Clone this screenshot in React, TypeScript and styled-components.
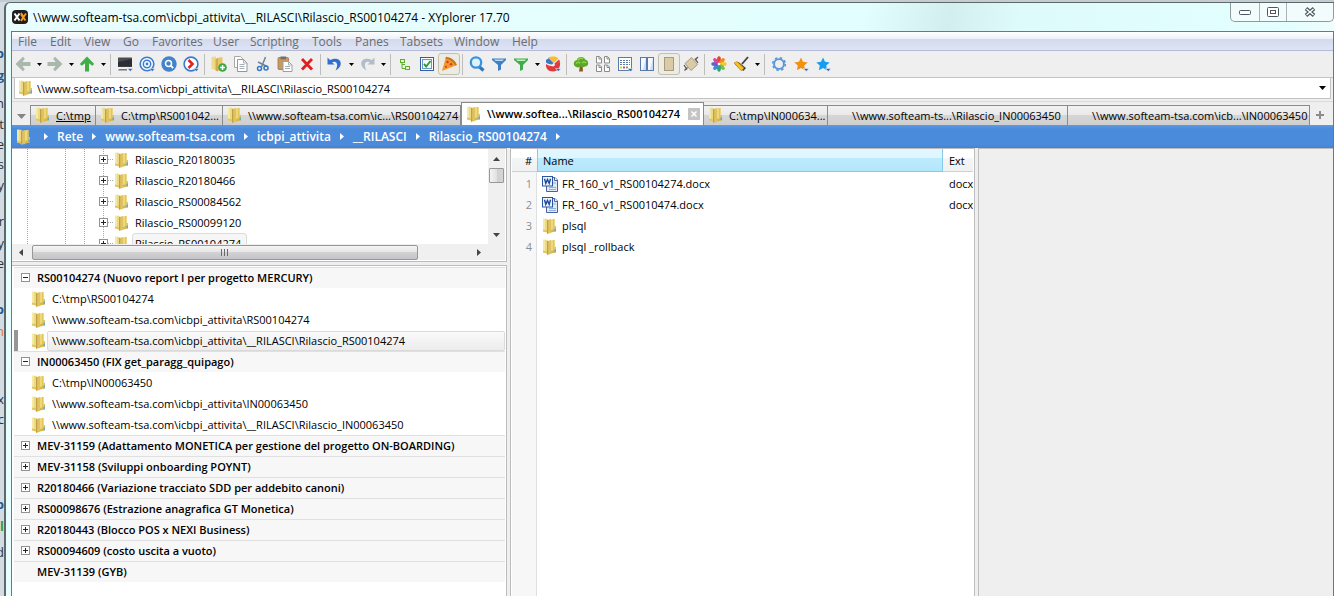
import React from 'react';
import styled, { createGlobalStyle, css } from 'styled-components';

const uiFont = '"Open Sans", "Noto Sans", sans-serif';

const GlobalStyle = createGlobalStyle`
  *, *::before, *::after { box-sizing: border-box; }
  html, body, #root { height: 100%; }
  body { margin: 0; overflow: hidden; background: #d3dce3; font: 11px/21px ${uiFont}; color: #000; }
  button, input { font: inherit; color: inherit; }
  button { border: 0; padding: 0; margin: 0; background: none; cursor: default; white-space: pre; }
  a { color: inherit; text-decoration: none; }
  svg { display: block; flex: none; }
  ul { list-style: none; margin: 0; padding: 0; }
`;

/* ---------- window shell ---------- */

const Desktop = styled.div`
  display: flex;
  height: 100%;
  padding-top: 2px;
  background: linear-gradient(#c3ccd3 0 2px, #d3dce3 2px);
`;

const Behind = styled.div`
  flex: none;
  width: 4px;
  padding-top: 41px;
  overflow: hidden;
  background: #d3dce3;
`;

const BehindLine = styled.div<{ $h: number; $color?: string; $bold?: boolean }>`
  display: flex;
  justify-content: flex-end;
  height: ${p => p.$h}px;
  font-size: 13px;
  line-height: 20px;
  color: ${p => p.$color || '#333'};
  font-weight: ${p => (p.$bold ? 700 : 400)};
`;

const Window = styled.div`
  flex: 1;
  min-width: 0;
  display: flex;
  flex-direction: column;
  border: 1px solid #5f6868;
  border-width: 1px 0 0 2px;
  border-radius: 6px 0 0 0;
  background: linear-gradient(100deg, #e9fdfd 0, #e2fefe 60%, #d3eeee 66%, #defbfb 71%, #e3ffff 90%, #f4fcfc 94%);
`;

const TitleBar = styled.header`
  display: flex;
  align-items: flex-start;
  height: 28px;
  padding-left: 6px;
`;

const Title = styled.h1`
  flex: 1;
  display: flex;
  align-items: center;
  gap: 5px;
  margin: 0;
  height: 28px;
  font-size: 12px;
  font-weight: 400;
  white-space: pre;
`;

const Captions = styled.div`
  display: flex;
  height: 19px;
  border: 1px solid #8f9a9c;
  border-top: 0;
  border-radius: 0 0 5px 5px;
  background: #f3fcfc;
`;

const CaptionButton = styled.button<{ $w: number }>`
  display: flex;
  align-items: center;
  justify-content: center;
  width: ${p => p.$w}px;
  & + & { border-left: 1px solid #a9b2b4; }
`;

const Client = styled.div`
  flex: 1;
  min-height: 0;
  display: flex;
  flex-direction: column;
  margin-left: 5px;
  border: 1px solid #6f7777;
  border-bottom: 0;
  background: #efefef;
`;

const MenuBar = styled.nav`
  display: flex;
  align-items: center;
  height: 19px;
  padding-left: 6px;
  border-bottom: 1px solid #b5bbd6;
  background: linear-gradient(#fff 0, #edf0f8 7px, #d3daee 7px, #dfe4f4 18px);
`;

const MenuItem = styled.button<{ $w: number }>`
  width: ${p => p.$w}px;
  padding-top: 2px;
  text-align: left;
  font-size: 12px;
  line-height: 16px;
  color: #6d6d6d;
`;

/* ---------- toolbar ---------- */

const ToolBar = styled.div`
  display: flex;
  align-items: center;
  height: 27px;
  border-bottom: 1px solid #c3c3c3;
`;

const ToolButton = styled.button<{ $pressed?: boolean }>`
  display: flex;
  align-items: center;
  justify-content: center;
  width: 22px;
  height: 22px;
  border: 1px solid ${p => (p.$pressed ? '#c2c0ae' : 'transparent')};
  border-radius: 3px;
  background: ${p => (p.$pressed ? '#ecebe4' : 'none')};
`;

const CaretButton = styled.button`
  display: flex;
  align-items: center;
  justify-content: center;
  width: 10px;
  height: 22px;
`;

const ToolSeparator = styled.span`
  width: 1px;
  height: 21px;
  margin: 0 3px 0 2px;
  background: #bdbdbd;
`;

const AddressBar = styled.form`
  display: flex;
  align-items: center;
  height: 21px;
  margin: 0 2px;
  padding: 0 4px 0 3px;
  gap: 3px;
  border: 1px solid #c3c3c3;
  border-top: 0;
  background: #fff;
`;

const AddressInput = styled.input`
  flex: 1;
  min-width: 0;
  height: 18px;
  padding: 0;
  border: 0;
  outline: 0;
  background: none;
`;

/* ---------- tabs ---------- */

const TabStrip = styled.div`
  display: flex;
  align-items: flex-end;
  height: 26px;
  border-top: 2px solid #efefef;
  box-shadow: inset 0 1px #dadada;
`;

const TabMenu = styled.button`
  display: flex;
  align-items: center;
  justify-content: center;
  width: 18px;
  height: 18px;
`;

const Tab = styled.button<{ $w: number; $active?: boolean; $home?: boolean; $plain?: boolean }>`
  display: flex;
  align-items: center;
  gap: 5px;
  flex: 0 1 ${p => p.$w}px;
  min-width: 0;
  height: 20px;
  padding: 0 3px 1px ${p => (p.$plain ? 24 : 4)}px;
  overflow: hidden;
  border: 1px solid #8b8b8b;
  border-width: 1px 1px 0 0;
  background: linear-gradient(#f2f2f2 0, #e9e9e9 9px, #d6d6d6 9px, #cfcfcf);
  ${p => p.$home && css`
    border-left-width: 1px;
    span { text-decoration: underline; }
  `}
  ${p => p.$active && css`
    height: 23px;
    border-width: 1px 1px 0 1px;
    background: #fff;
    font-weight: 600;
  `}
`;

const CloseMark = styled.i`
  display: flex;
  align-items: center;
  justify-content: center;
  flex: none;
  width: 12px;
  height: 12px;
  margin-left: auto;
  background: #c4c4c4;
`;

const NewTab = styled.button`
  display: flex;
  align-items: center;
  justify-content: center;
  width: 20px;
  height: 20px;
`;

const Breadcrumb = styled.nav`
  display: flex;
  align-items: center;
  gap: 9px;
  height: 23px;
  padding-left: 4px;
  font-size: 12px;
  font-weight: 600;
  color: #fff;
  background: linear-gradient(#5f9ae2, #4b8bdb 4px, #4b8bdb 20px, #4382d4);
  svg + svg { margin-left: 3px; }
  a { white-space: pre; }
`;

/* ---------- panes ---------- */

const Panes = styled.main`
  flex: 1;
  min-height: 0;
  display: flex;
  gap: 3px;
`;

const NavColumn = styled.div`
  flex: none;
  width: 495px;
  display: flex;
  flex-direction: column;
  gap: 3px;
`;

const Pane = styled.section`
  border: 1px solid #bcbcbc;
  border-left: 0;
  background: #fff;
  padding: 0 1px 1px 0;
`;

const TreePane = styled(Pane)`
  display: grid;
  grid-template-columns: 1fr 17px;
  grid-template-rows: 95px 16px;
  flex: none;
`;

const TreeView = styled.ul`
  overflow: hidden;
  background:
    repeating-linear-gradient(#a8a8a8 0 1px, transparent 1px 2px) 15px 0 / 1px 100% no-repeat,
    repeating-linear-gradient(#a8a8a8 0 1px, transparent 1px 2px) 53px 0 / 1px 100% no-repeat,
    repeating-linear-gradient(#a8a8a8 0 1px, transparent 1px 2px) 72px 0 / 1px 100% no-repeat,
    repeating-linear-gradient(#a8a8a8 0 1px, transparent 1px 2px) 91px 0 / 1px 100% no-repeat;
`;

const TreeRow = styled.li`
  display: flex;
  align-items: center;
  height: 21px;
  padding-left: 87px;
`;

const Connector = styled.span`
  width: 5px;
  margin-right: 1px;
  border-top: 1px dotted #a8a8a8;
`;

const TreeLabel = styled.button<{ $selected?: boolean }>`
  height: 21px;
  margin-left: 2px;
  padding: 0 5px 0 2px;
  border: 1px solid ${p => (p.$selected ? '#dcdcdc' : 'transparent')};
  border-radius: 3px;
  background: ${p => (p.$selected ? '#f6f6f6' : 'none')};
  line-height: 19px;
`;

const VScroll = styled.div`
  display: flex;
  flex-direction: column;
  align-items: center;
  padding: 0 1px;
  background: #f0f0f0;
`;

const HScroll = styled.div`
  display: flex;
  align-items: center;
  background: #f0f0f0;
`;

const ScrollArrow = styled.button<{ $grow?: boolean }>`
  display: flex;
  align-items: center;
  justify-content: center;
  width: 19px;
  height: 19px;
  margin-top: ${p => (p.$grow ? 'auto' : 0)};
`;

const HArrow = styled(ScrollArrow)`
  height: 15px;
  width: 18px;
  margin: 0 2px 0 0;
  &:last-child { margin: 0 0 0 auto; }
`;

const VThumb = styled.div`
  width: 15px;
  height: 15px;
  border: 1px solid #979797;
  border-radius: 1px;
  background: linear-gradient(90deg, #f3f3f3, #e2e2e2 50%, #cfcfd2 52%, #d6d6d9);
`;

const HThumb = styled.div`
  display: flex;
  align-items: center;
  justify-content: center;
  flex: 0 0 81%;
  height: 15px;
  border: 1px solid #979797;
  border-radius: 2px;
  background: linear-gradient(#f5f5f5, #e6e6e6 45%, #d2d2d4 50%, #c4c4c8);
`;

const ScrollCorner = styled.div`
  background: #f0f0f0;
`;

const CatalogPane = styled(Pane)`
  flex: 1;
  min-height: 0;
  border-bottom: 0;
  padding-top: 1px;
  padding-left: 2px;
  overflow: hidden;
`;

const CategoryHead = styled.button<{ $leaf?: boolean }>`
  display: flex;
  align-items: center;
  gap: 7px;
  width: 100%;
  height: 21px;
  padding-left: ${p => (p.$leaf ? 23 : 7)}px;
  box-shadow: inset 0 1px #e0e0e0;
  background: #f7f7f7;
  font-weight: 600;
`;

const CatalogRow = styled.li<{ $current?: boolean }>`
  display: flex;
  align-items: center;
  height: 21px;
  padding-left: 17px;
  ${p => p.$current && css`
    padding-left: 13px;
    border-left: 4px solid #969696;
  `}
`;

const CatalogLabel = styled.button<{ $current?: boolean }>`
  flex: 1;
  height: 20px;
  padding-left: 4px;
  text-align: left;
  line-height: 18px;
  border: 1px solid transparent;
  border-radius: 2px;
  ${p => p.$current && css`
    border-color: #dadada;
    background: linear-gradient(#fafafa, #ececec);
  `}
`;

const ListPane = styled(Pane)`
  flex: none;
  width: 465px;
  border-left: 1px solid #bcbcbc;
  border-bottom: 0;
  padding: 0 1px;
  overflow: hidden;
`;

const FileTable = styled.table`
  width: 100%;
  height: 100%;
  table-layout: fixed;
  border-collapse: separate;
  border-spacing: 0;
`;

const HeadCell = styled.th<{ $w?: number; $sorted?: boolean; $right?: boolean }>`
  width: ${p => (p.$w ? `${p.$w}px` : 'auto')};
  height: 23px;
  padding: 0 5px 0 6px;
  text-align: ${p => (p.$right ? 'right' : 'left')};
  font-weight: 400;
  border-bottom: 1px solid #d0d0d0;
  background: linear-gradient(#fff 0, #fff 9px, #f4f5f7 9px, #f0f1f3);
  ${p => p.$sorted && css`
    padding-left: 5px;
    border: 1px solid #86c9e8;
    border-top: 0;
    background: linear-gradient(#e2f6fe 0, #dff6fe 9px, #bcebfd 9px, #b4e6fb);
  `}
`;

const Cell = styled.td<{ $index?: boolean; $name?: boolean }>`
  height: 21px;
  padding: 0 0 0 ${p => (p.$name ? 5 : 6)}px;
  overflow: hidden;
  white-space: pre;
  vertical-align: top;
  ${p => p.$index && css`
    padding: 0 4px 0 0;
    color: #8a8f96;
    text-align: right;
    background: #f7f7f7;
    border-right: 1px solid #e0e0e0;
  `}
`;

const FillRow = styled.tr`
  td { height: auto; }
`;

const SpacerRow = styled.tr`
  td { height: 1px; line-height: 0; }
`;

const FileName = styled.button`
  display: flex;
  align-items: center;
  gap: 4px;
  height: 21px;
`;

const PreviewPane = styled.section`
  flex: 1;
  border: 1px solid #bcbcbc;
  border-width: 1px 0 0 1px;
`;

/* ---------- icons ---------- */

type IconProps = { w?: number; h?: number; children: React.ReactNode; box?: string };
const Icon = ({ w = 16, h = 16, box, children }: IconProps) => (
  <svg width={w} height={h} viewBox={box || `0 0 ${w} ${h}`} aria-hidden="true">{children}</svg>
);

const Folder = () => (
  <Icon>
    <path d="M1 .5L5.500 1v13.500L1 13.500z" fill="#f5e9a6" />
    <path d="M3 .7L5.500 1v13.500L3 14z" fill="#ecd986" />
    <path d="M1 11.500l4.500 1v2L1 13.500z" fill="#e0c565" />
    <path d="M8.500 1.500L12.500.8v13L8.500 14.500z" fill="#efd878" />
    <path d="M11 1.200l1.500-.3v13l-1.500.2z" fill="#e3c55a" />
    <path d="M8.500 12l4-.7v2.500l-4 .7z" fill="#d9b84a" />
    <path d="M5 2.200L9 1v14l-4 .8z" fill="#dfc262" />
    <path d="M5 2.200l1.200-.4v13.700L5 15.800z" fill="#c2a044" />
    <path d="M12.500 8h1.500v5.500l-1.500.3z" fill="#dcc05a" />
    <path d="M12.500 10.500h1.300v2.700h-1.300z" fill="#4aa5e0" />
  </Icon>
);

const WordDoc = () => (
  <Icon>
    <path d="M6.500 1.500h6.500l2.500 2.500v11.500h-11v-6z" fill="#dfe9f8" stroke="#4463a0" />
    <path d="M12.500 1.500v3h3" fill="#fff" stroke="#4463a0" />
    <path d="M11 7h3M7 11.500h7M7 13.500h7" stroke="#8fb0e0" />
    <rect x=".5" y=".5" width="10" height="9.500" fill="#eef4fd" stroke="#2a569e" />
    <path d="M2.500 2.800L3.800 7.400 5.500 3.500 7.200 7.400 8.500 2.800" fill="none" stroke="#1c4b9c" strokeWidth="1.400" />
  </Icon>
);

const Expander = ({ open }: { open?: boolean }) => (
  <Icon w={9} h={9}>
    <rect x=".5" y=".5" width="8" height="8" fill="#fff" stroke="#929292" />
    <path d={open ? 'M2 4.500h5' : 'M2 4.500h5M4.500 2v5'} stroke="#222" />
  </Icon>
);

const Caret = () => <Icon w={5} h={3}><path d="M0 0h5L2.500 3z" fill="#000" /></Icon>;
const CrumbArrow = () => <Icon w={4} h={7}><path d="M0 0v7l4-3.500z" fill="#fff" /></Icon>;
const Drop = () => <path d="M10.500 12.500h5.500l-2.750 3z" fill="#3c63ad" stroke="#fff" strokeWidth=".5" />;

const arrowLeft = 'M.5 8L8 .8 9.800 2.800 7.300 6H15.500V10H7.300L9.800 13.200 8 15.200z';
const star = 'M8 1.500l2 4.300 4.700.6-3.500 3.200.9 4.700L8 12l-4.100 2.300.9-4.700L1.300 6.400 6 5.800z';
const funnel = 'M1 2.500h14v1.500L10 9v4.500L7 15V9L1 4z';

const icons: Record<string, React.ReactNode> = {
  Back: <path d={arrowLeft} fill="#a9b8ab" />,
  Forward: <path d={arrowLeft} fill="#a9b8ab" transform="rotate(180 8 8)" />,
  Up: <path d={arrowLeft} fill="#3fae49" transform="rotate(90 8 8)" />,
  Computer: <>
    <rect x="1" y="1.500" width="14" height="9.500" rx=".5" fill="#4a4e52" />
    <path d="M1 6L15 3V10.500H1z" fill="#2b2f33" /><path d="M2 13h8v1.500H1z" fill="#777" /><Drop />
  </>,
  Target: <>
    <circle cx="8" cy="8" r="6.800" fill="#fff" stroke="#3a7bd0" strokeWidth="1.600" />
    <circle cx="8" cy="8" r="3.700" fill="none" stroke="#3a7bd0" strokeWidth="1.500" /><circle cx="8" cy="8" r="1.400" fill="#3a7bd0" /><Drop />
  </>,
  'Quick search': <>
    <circle cx="8" cy="8" r="7.700" fill="#4482cb" />
    <circle cx="7.500" cy="7.500" r="3" fill="none" stroke="#fff" strokeWidth="1.500" /><path d="M9.700 9.700l2.500 2.500" stroke="#fff" strokeWidth="1.800" />
  </>,
  'Go to': <>
    <circle cx="8" cy="8" r="6.900" fill="#fff" stroke="#3a7bd0" strokeWidth="1.600" />
    <path d="M5.500 4l4 4-4 4" fill="none" stroke="#e02424" strokeWidth="2.600" /><Drop />
  </>,
  'New folder': <>
    <path d="M.5 1L5 .5V14l-4.500-1z" fill="#efd987" /><path d="M6 2l5.500-1v13L6 15z" fill="#e6c766" /><path d="M4.500 3L7 2v13.500l-2.500-1z" fill="#cfae50" />
    <circle cx="11.500" cy="11.500" r="4.300" fill="#3fa648" /><path d="M9 11.500h5M11.500 9v5" stroke="#fff" strokeWidth="1.500" />
  </>,
  Copy: <>
    <path d="M1.500.5h6l3 3v8h-9z" fill="#fff" stroke="#a3a9ad" /><path d="M4.500 3.500h6l3.500 3.500v8.500H4.500z" fill="#fff" stroke="#8f979c" />
    <path d="M10.500 3.500V7H14M6.500 8.500h5M6.500 10.500h5M6.500 12.500h5" fill="none" stroke="#a9b0b5" />
  </>,
  Cut: <>
    <path d="M10.500 1L6.500 11M3 6l9 4.500" stroke="#6f8396" strokeWidth="1.500" />
    <circle cx="4.500" cy="12.500" r="2" fill="none" stroke="#3577c8" strokeWidth="1.500" /><circle cx="11" cy="12" r="2" fill="none" stroke="#3577c8" strokeWidth="1.500" />
  </>,
  Paste: <>
    <rect x="1" y="1.500" width="10.500" height="12" rx="1" fill="#c79a63" stroke="#9a7747" strokeWidth=".8" /><rect x="3.500" y=".5" width="5.500" height="2.800" fill="#6f6f6f" />
    <path d="M6 5.500h5.500L15 9v6.500H6z" fill="#fff" stroke="#9aa1a6" /><path d="M11.500 5.500V9H15M8 10.500h5M8 12.500h5" fill="none" stroke="#a9b0b5" />
  </>,
  Delete: <path d="M3 3l10 10.500M13 3L3 13.500" stroke="#e02020" strokeWidth="2.800" />,
  Undo: <path d="M.5 1.500V8.500H7.500L5 6.300C9.500 4 12 8 8.500 14.500 17.500 10 14.500-1 3 4z" fill="#2f6fd0" />,
  Redo: <path d="M15.500 1.500V8.500H8.500L11 6.300C6.500 4 4 8 7.500 14.500-1.500 10 1.500-1 13 4z" fill="#b3bcc8" />,
  'Mini tree': <>
    <path d="M5 6v6.500h4M5 8.500h3" fill="none" stroke="#5fae2a" />
    <rect x="3.500" y="3.500" width="4" height="3" fill="#e8f6d8" stroke="#5fae2a" /><rect x="8.500" y="10.500" width="4" height="3" fill="#e8f6d8" stroke="#5fae2a" />
  </>,
  'Check mode': <>
    <rect x="1.500" y="1.500" width="13" height="13" fill="#fff" stroke="#2f5f9c" /><rect x="3.500" y="3.500" width="9" height="9" fill="#f2f8ff" stroke="#6c94c4" />
    <path d="M5 8l2.200 2.500L11.500 5" fill="none" stroke="#2c9a36" strokeWidth="1.900" />
  </>,
  Pizza: <>
    <path d="M1 15L5 .8C10 1.500 14.500 5 15.800 9z" fill="#f6962e" /><path d="M5 .8C10 1.500 14.500 5 15.800 9l-1.500.5C12.500 6 9 3.500 4.500 2.500z" fill="#c8761f" />
    <circle cx="6.500" cy="6" r="1.200" fill="#c9431a" /><circle cx="10" cy="8.300" r="1.200" fill="#c9431a" /><circle cx="5" cy="10.800" r="1" fill="#c9431a" />
  </>,
  Find: <>
    <path d="M10 10.500l4.500 4" stroke="#3277bd" strokeWidth="3.200" /><circle cx="7" cy="6.500" r="5.200" fill="#dff1fc" stroke="#3a93dd" strokeWidth="2.300" />
  </>,
  Filter: <><path d={funnel} fill="#3f80c4" /><path d="M3 3.500h10l-1.500 1.500h-7z" fill="#bcd8f2" /></>,
  'Visual filter': <><path d={funnel} fill="#3fae49" /><path d="M3 3.500h10l-1.500 1.500h-7z" fill="#c9efc4" /></>,
  'Color filter': <>
    <path d="M1 8c2 2 5 1.500 7 2.500 2-.5 4-4 7-4.500.8 5-2 9.500-7 9.500S.5 12 1 8z" fill="#e03a3a" />
    <path d="M1 4L4 2l4.500 5L7 8.500C5 8 3 8 1 6.500z" fill="#3b78c5" />
    <path d="M3 1.500C6.500 0 11 0 13.500 2.500L8.500 7z" fill="#f7bd2c" /><path d="M9.500 7.500L14 3.500l1 2-5 4z" fill="#e03a3a" /><Drop />
  </>,
  Tree: <>
    <path d="M7 9h2.500l.5 6.500H6z" fill="#8f5a21" />
    <path d="M4 4C4 0 12 0 12 3.500c4 .5 4.500 6.500 0 7C10 12 8 11 7.500 10.500 5 12.500.5 11 .8 7.500.8 5.500 2 4.500 4 4z" fill="#5aa826" />
    <path d="M5 4.500C6 2 9 1.500 10 3M3 7.500c1.500-2 3.500-1.500 4 0M9 7c1-1.500 3-1.500 4 0" stroke="#8fd04a" fill="none" strokeWidth="1.500" />
  </>,
  'Dual pages': <path d="M1.500.5h3l2 2v4.500h-5zM9.500.5h3l2 2v4.500h-5zM1.500 9h3l2 2v4.500h-5zM9.500 9h3l2 2v4.500h-5zM4 .8v2.200h2.500M12 .8v2.200h2.500M4 9.300v2.200h2.500M12 9.300v2.200h2.500" fill="#fff" stroke="#8b8b8b" />,
  Details: <>
    <rect x="1.500" y="1.500" width="13" height="13" fill="#fff" stroke="#5b7ba8" /><path d="M3 4.500h10M3 6.500h10M3 8.500h10" stroke="#5b7ba8" strokeDasharray="2 1" />
    <path d="M3 10.500h2v2H3z" fill="#f2c931" /><path d="M6 10.500h2v2H6z" fill="#e0429d" /><path d="M9 10.500h2v2H9z" fill="#54b948" /><Drop />
  </>,
  'Dual pane': <>
    <rect x="1.500" y="1.500" width="6" height="13" fill="#f4f8ff" stroke="#5b78ab" /><rect x="8.500" y="1.500" width="6" height="13" fill="#f4f8ff" stroke="#5b78ab" />
    <path d="M7 2v12H4zM14 2v12h-3z" fill="#c9dbf5" />
  </>,
  'Preview pane': <rect x="3.500" y="1.500" width="9" height="13" fill="#dcc9a5" stroke="#a79a80" />,
  'Rotate view': <>
    <path d="M1 9l3 4.500M15 7l-3-4.500M12 4l3-3M1.500 14.500l3-3" stroke="#555" strokeWidth="1.300" /><path d="M8.500 1.500l6 7-6.500 6-6-7z" fill="#dcc9a5" stroke="#a79a80" />
  </>,
  Flower: <>
    {['#e8412f', '#f08a24', '#f4c82e', '#7cc144', '#2fa36b', '#3a8bd8', '#6b5bc4', '#d9479b'].map((c, i) => (
      <ellipse key={c} cx="8" cy="3.700" rx="1.900" ry="3.400" fill={c} transform={`rotate(${i * 45} 8 8)`} />
    ))}
    <circle cx="8" cy="8" r="1.300" fill="#fff" />
  </>,
  Brush: <>
    <path d="M9 8l6-7" stroke="#444" strokeWidth="1.900" /><path d="M2 8.500l3.500-2.500L13 12l-2.500 3z" fill="#444" /><path d="M1 7l3-1.500 7 6.500-2.500 3z" fill="#f4bf1f" stroke="#a8780c" strokeWidth=".6" />
  </>,
  Settings: <>
    <circle cx="8" cy="8" r="6.300" fill="none" stroke="#5b96d8" strokeWidth="1.600" strokeDasharray="2.500 2.448" /><circle cx="8" cy="8" r="4.900" fill="none" stroke="#5b96d8" strokeWidth="1.900" />
  </>,
  Favorites: <><path d={star} fill="#f29111" /><Drop /></>,
  'Favorite files': <><path d={star} fill="#159df0" /><Drop /></>,
};

/* ---------- content ---------- */

const behind: { t: string; h: number; c?: string; b?: boolean }[] = [
  { t: 'b', h: 22, c: '#1d5a94', b: true }, { t: 'g', h: 28, c: '#1d5a94', b: true }, { t: 'n', h: 21 }, { t: 't', h: 20 },
  { t: 'e', h: 20 }, { t: 's', h: 21 }, { t: 'y', h: 36 }, { t: 'r', h: 22 }, { t: 'y', h: 20 }, { t: 'e', h: 46 },
  { t: 'p', h: 22, c: '#1d5a94', b: true }, { t: 'm', h: 68, c: '#e07a20' }, { t: 'x', h: 20 }, { t: 'c', h: 85 },
  { t: 'p', h: 22, c: '#1d5a94', b: true }, { t: 'l', h: 26, c: '#3a9c2a', b: true }, { t: 'd', h: 20 },
];

const menus: [string, number][] = [
  ['File', 32], ['Edit', 34], ['View', 39], ['Go', 29], ['Favorites', 61], ['User', 37], ['Scripting', 62],
  ['Tools', 43], ['Panes', 45], ['Tabsets', 54], ['Window', 58], ['Help', 30],
];

const toolbar = [
  'Back', 'v', 'Forward', 'v', 'Up', 'v', '|', 'Computer', 'Target', 'Quick search', 'Go to', '|',
  'New folder', 'Copy', 'Cut', 'Paste', 'Delete', '|', 'Undo', 'v', 'Redo', 'v', '|',
  'Mini tree', 'Check mode', 'Pizza', '|', 'Find', 'Filter', 'Visual filter', 'v', 'Color filter', '|',
  'Tree', 'Dual pages', 'Details', 'Dual pane', 'Preview pane', 'Rotate view', '|', 'Flower', 'Brush', 'v', '|',
  'Settings', 'Favorites', 'Favorite files',
];
const pressed = ['Pizza', 'Preview pane'];

const tabs: { text: string; w: number; home?: boolean; active?: boolean; plain?: boolean }[] = [
  { text: 'C:\\tmp', w: 66, home: true },
  { text: 'C:\\tmp\\RS001042...', w: 127 },
  { text: '\\\\www.softeam-tsa.com\\ic...\\RS00104274', w: 238 },
  { text: '\\\\www.softea...\\Rilascio_RS00104274', w: 243, active: true },
  { text: 'C:\\tmp\\IN000634...', w: 124 },
  { text: '\\\\www.softeam-ts...\\Rilascio_IN00063450', w: 240, plain: true },
  { text: '\\\\www.softeam-tsa.com\\icb...\\IN00063450', w: 242, plain: true },
];

const crumbs = ['Rete', 'www.softeam-tsa.com', 'icbpi_attivita', '__RILASCI', 'Rilascio_RS00104274'];
const treeRows = ['Rilascio_R20180035', 'Rilascio_R20180466', 'Rilascio_RS00084562', 'Rilascio_RS00099120', 'Rilascio_RS00104274'];

const catalog: { head: string; items?: string[]; leaf?: boolean }[] = [
  {
    head: 'RS00104274 (Nuovo report I per progetto MERCURY)',
    items: ['C:\\tmp\\RS00104274', '\\\\www.softeam-tsa.com\\icbpi_attivita\\RS00104274', '\\\\www.softeam-tsa.com\\icbpi_attivita\\__RILASCI\\Rilascio_RS00104274'],
  },
  {
    head: 'IN00063450 (FIX get_paragg_quipago)',
    items: ['C:\\tmp\\IN00063450', '\\\\www.softeam-tsa.com\\icbpi_attivita\\IN00063450', '\\\\www.softeam-tsa.com\\icbpi_attivita\\__RILASCI\\Rilascio_IN00063450'],
  },
  { head: 'MEV-31159 (Adattamento MONETICA per gestione del progetto ON-BOARDING)' },
  { head: 'MEV-31158 (Sviluppi onboarding POYNT)' },
  { head: 'R20180466 (Variazione tracciato SDD per addebito canoni)' },
  { head: 'RS00098676 (Estrazione anagrafica GT Monetica)' },
  { head: 'R20180443 (Blocco POS x NEXI Business)' },
  { head: 'RS00094609 (costo uscita a vuoto)' },
  { head: 'MEV-31139 (GYB)', leaf: true },
];
const currentItem = catalog[0].items![2];

const files = [
  { name: 'FR_160_v1_RS00104274.docx', ext: 'docx' },
  { name: 'FR_160_v1_RS0010474.docx', ext: 'docx' },
  { name: 'plsql', ext: '' },
  { name: 'plsql _rollback', ext: '' },
];

export default function App() {
  return (
    <>
      <GlobalStyle />
      <Desktop>
        <Behind aria-hidden="true">
          {behind.map((l, i) => <BehindLine key={i} $h={l.h} $color={l.c} $bold={l.b}>{l.t}</BehindLine>)}
        </Behind>
        <Window>
          <TitleBar>
            <Title>
              <Icon w={16} h={14}>
                <rect width="16" height="14" rx="4" fill="#1f1f1f" />
                <path d="M2.500 3.500l5 7M7.500 3.500l-5 7" stroke="#fff" strokeWidth="2" />
                <path d="M9 3l2.500 4L14 3.500M13.500 10.500L9 4.500M11.500 7L9 11" stroke="#f39a1f" strokeWidth="1.900" fill="none" />
              </Icon>
              {'\\\\www.softeam-tsa.com\\icbpi_attivita\\__RILASCI\\Rilascio_RS00104274 - XYplorer 17.70'}
            </Title>
            <Captions>
              <CaptionButton $w={28} aria-label="Minimize">
                <Icon w={12} h={5}><rect x=".5" y=".5" width="11" height="4" rx="1" fill="#fff" stroke="#4c5560" /></Icon>
              </CaptionButton>
              <CaptionButton $w={27} aria-label="Maximize">
                <Icon w={12} h={10}>
                  <rect x=".5" y=".5" width="11" height="9" rx="1" fill="#fff" stroke="#4c5560" /><rect x="3.500" y="3.500" width="5" height="3" fill="#fff" stroke="#4c5560" />
                </Icon>
              </CaptionButton>
              <CaptionButton $w={47} aria-label="Close">
                <Icon w={12} h={10}>
                  <path d="M2 1.500l8 7M10 1.500l-8 7" stroke="#4c5560" strokeWidth="3.800" /><path d="M2.500 2l7 6M9.500 2l-7 6" stroke="#fff" strokeWidth="1.500" />
                </Icon>
              </CaptionButton>
            </Captions>
          </TitleBar>
          <Client>
            <MenuBar>{menus.map(([m, w]) => <MenuItem key={m} $w={w}>{m}</MenuItem>)}</MenuBar>
            <ToolBar role="toolbar">
              {toolbar.map((t, i) =>
                t === '|' ? <ToolSeparator key={i} />
                  : t === 'v' ? <CaretButton key={i} aria-label="More"><Caret /></CaretButton>
                    : <ToolButton key={i} aria-label={t} $pressed={pressed.includes(t)}><Icon>{icons[t]}</Icon></ToolButton>
              )}
            </ToolBar>
            <AddressBar>
              <Folder />
              <AddressInput aria-label="Address" defaultValue={'\\\\www.softeam-tsa.com\\icbpi_attivita\\__RILASCI\\Rilascio_RS00104274'} />
              <button type="button" aria-label="History"><Icon w={7} h={4}><path d="M0 0h7L3.500 4z" /></Icon></button>
            </AddressBar>
            <TabStrip role="tablist">
              <TabMenu aria-label="Tab list"><Icon w={9} h={5}><path d="M0 0h9L4.500 5z" fill="#858585" /></Icon></TabMenu>
              {tabs.map(t => (
                <Tab key={t.text} role="tab" aria-selected={!!t.active} $w={t.w} $active={t.active} $home={t.home} $plain={t.plain}>
                  {!t.plain && <Folder />}
                  <span>{t.text}</span>
                  {t.active && <CloseMark><Icon w={6} h={6}><path d="M.5.5l5 5M5.500.5l-5 5" stroke="#fff" strokeWidth="1.500" /></Icon></CloseMark>}
                </Tab>
              ))}
              <NewTab aria-label="New tab"><Icon w={8} h={8}><path d="M0 4h8M4 0v8" stroke="#8c8c8c" strokeWidth="2" /></Icon></NewTab>
            </TabStrip>
            <Breadcrumb>
              <Folder />
              <CrumbArrow />
              {crumbs.map(c => <React.Fragment key={c}><a href="#">{c}</a><CrumbArrow /></React.Fragment>)}
            </Breadcrumb>
            <Panes>
              <NavColumn>
                <TreePane>
                  <TreeView>
                    {treeRows.map((r, i) => (
                      <TreeRow key={r}>
                        <Expander /><Connector /><Folder />
                        <TreeLabel $selected={i === 4}>{r}</TreeLabel>
                      </TreeRow>
                    ))}
                  </TreeView>
                  <VScroll>
                    <ScrollArrow aria-label="Scroll up"><Icon w={7} h={4}><path d="M0 4h7L3.500 0z" fill="#444" /></Icon></ScrollArrow>
                    <VThumb />
                    <ScrollArrow $grow aria-label="Scroll down"><Icon w={7} h={4}><path d="M0 0h7L3.500 4z" fill="#444" /></Icon></ScrollArrow>
                  </VScroll>
                  <HScroll>
                    <HArrow aria-label="Scroll left"><Icon w={4} h={7}><path d="M4 0v7L0 3.500z" fill="#444" /></Icon></HArrow>
                    <HThumb><Icon w={8} h={7}><path d="M.5 0v7M3.500 0v7M6.500 0v7" stroke="#6a6a6a" /></Icon></HThumb>
                    <HArrow aria-label="Scroll right"><Icon w={4} h={7}><path d="M0 0v7l4-3.500z" fill="#444" /></Icon></HArrow>
                  </HScroll>
                  <ScrollCorner />
                </TreePane>
                <CatalogPane>
                  {catalog.map(c => (
                    <div key={c.head}>
                      <CategoryHead $leaf={c.leaf}>{!c.leaf && <Expander open={!!c.items} />}{c.head}</CategoryHead>
                      {c.items && (
                        <ul>
                          {c.items.map(it => (
                            <CatalogRow key={it} $current={it === currentItem}>
                              <Folder /><CatalogLabel $current={it === currentItem}>{it}</CatalogLabel>
                            </CatalogRow>
                          ))}
                        </ul>
                      )}
                    </div>
                  ))}
                </CatalogPane>
              </NavColumn>
              <ListPane>
                <FileTable>
                  <thead>
                    <tr>
                      <HeadCell $w={25} $right>#</HeadCell>
                      <HeadCell $sorted>Name</HeadCell>
                      <HeadCell $w={30}>Ext</HeadCell>
                    </tr>
                  </thead>
                  <tbody>
                    <SpacerRow><Cell $index /><Cell /><Cell /></SpacerRow>
                    {files.map((f, i) => (
                      <tr key={f.name}>
                        <Cell $index>{i + 1}</Cell>
                        <Cell $name><FileName>{f.ext ? <WordDoc /> : <Folder />}{f.name}</FileName></Cell>
                        <Cell>{f.ext}</Cell>
                      </tr>
                    ))}
                    <FillRow><Cell $index /><Cell /><Cell /></FillRow>
                  </tbody>
                </FileTable>
              </ListPane>
              <PreviewPane aria-label="Preview" />
            </Panes>
          </Client>
        </Window>
      </Desktop>
    </>
  );
}
